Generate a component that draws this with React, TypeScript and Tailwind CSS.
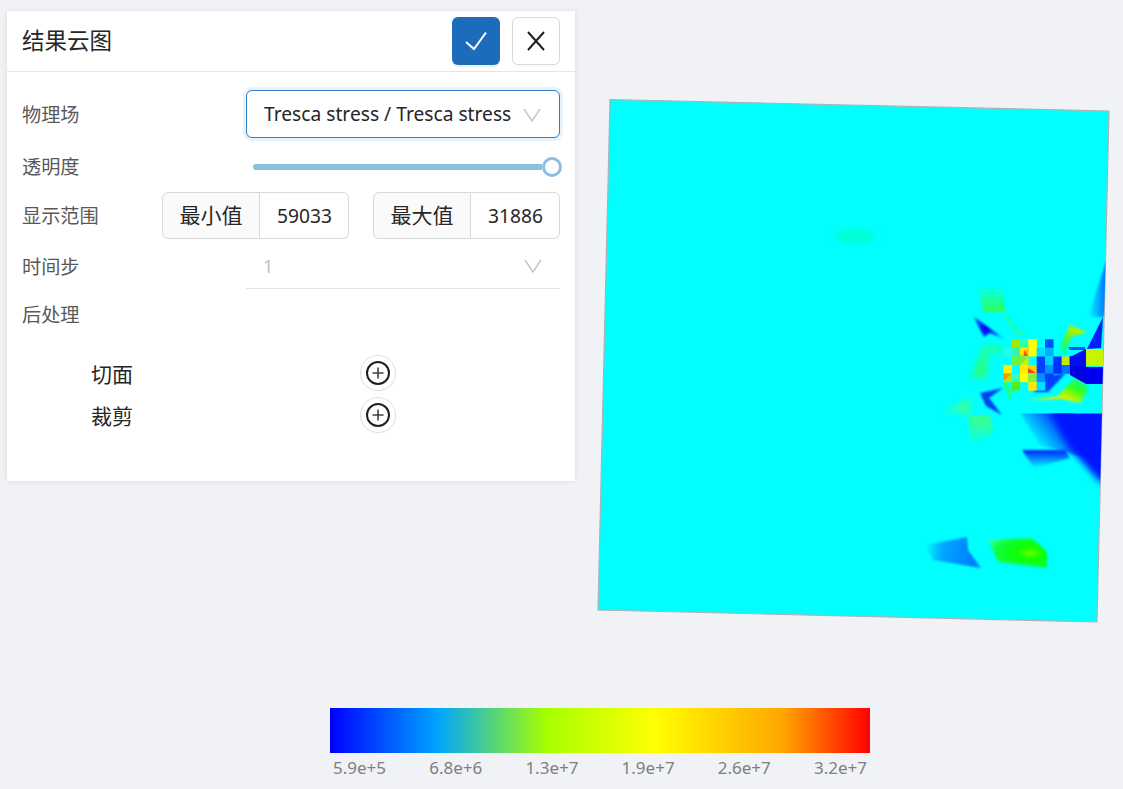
const squares: [number, number, string][] = [
  // col, row, colour
  [1, 0, "#a5e800"], [2, 0, "#30ffb0"], [3, 0, "#ffff00"], [5, 0, "#0050ff"],
  [0, 1, "#20ffe8"], [1, 1, "#30f5b0"], [2, 1, "#ffe800"], [3, 1, "#ffff00"], [4, 1, "#00ddff"], [5, 1, "#00b0ff"],
  [1, 2, "#70f040"], [2, 2, "#d0f000"], [4, 2, "#0040ff"], [5, 2, "#00d0ff"], [6, 2, "#0030ff"], [7, 2, "#c8e800"],
  [0, 3, "#fff000"], [2, 3, "#ffee00"], [3, 3, "#ffd000"], [4, 3, "#0040ff"], [5, 3, "#0090ff"], [6, 3, "#0030ff"], [7, 3, "#0070ff"],
  [0, 4, "#b0e800"], [1, 4, "#30ffc0"], [2, 4, "#ffff00"], [3, 4, "#80f040"], [4, 4, "#0090ff"], [5, 4, "#0040ff"],
  [1, 5, "#50f020"], [3, 5, "#ffe800"], [4, 5, "#00e0ff"],
];

const colX = [1003.3, 1011.6, 1020, 1028.3, 1036.7, 1045, 1053.3, 1061.7];
const rowY = [339.3, 347.6, 356.5, 365, 373.4, 381.8];

function Field() {
  return (
    <svg className="absolute left-0 top-0" width="1123" height="789" viewBox="0 0 1123 789">
      <defs>
        <clipPath id="plate">
          <polygon points="610,99.5 1109,111 1097,622 598,610" />
        </clipPath>
        <clipPath id="belowLine">
          <rect x="1000" y="413.5" width="120" height="100" />
        </clipPath>
        <filter id="soft" x="-30%" y="-30%" width="160%" height="160%">
          <feGaussianBlur stdDeviation="3" />
        </filter>
        <filter id="softer" x="-30%" y="-30%" width="160%" height="160%">
          <feGaussianBlur stdDeviation="5" />
        </filter>
        <filter id="slight" x="-30%" y="-30%" width="160%" height="160%">
          <feGaussianBlur stdDeviation="0.8" />
        </filter>
        <linearGradient id="edgeBlue" x1="0" y1="0" x2="1" y2="0">
          <stop offset="0" stopColor="#00ffff" />
          <stop offset="1" stopColor="#0050ff" />
        </linearGradient>
        <linearGradient id="fadeDown" x1="0" y1="0" x2="0" y2="1">
          <stop offset="0" stopColor="#0020ff" />
          <stop offset="1" stopColor="#00ffff" />
        </linearGradient>
        <linearGradient id="topFade" gradientUnits="userSpaceOnUse" x1="1064" y1="420" x2="1034" y2="444">
          <stop offset="0" stopColor="#0020ff" />
          <stop offset="0.55" stopColor="#00a0ff" />
          <stop offset="1" stopColor="#00ffff" />
        </linearGradient>
        <linearGradient id="greenUp" x1="0" y1="0" x2="0" y2="1">
          <stop offset="0" stopColor="#00ffff" />
          <stop offset="1" stopColor="#30ff50" />
        </linearGradient>
        <linearGradient id="greenLeft" x1="1" y1="0" x2="0" y2="0">
          <stop offset="0" stopColor="#40ff90" />
          <stop offset="1" stopColor="#00ffff" />
        </linearGradient>
        <linearGradient id="greenFade" x1="0" y1="0" x2="0" y2="1">
          <stop offset="0" stopColor="#40ff80" />
          <stop offset="1" stopColor="#00ffff" />
        </linearGradient>
        <linearGradient id="lobe" gradientUnits="userSpaceOnUse" x1="1070" y1="400" x2="1082" y2="376">
          <stop offset="0" stopColor="#d8f000" />
          <stop offset="0.45" stopColor="#30ff20" />
          <stop offset="1" stopColor="#00ffc0" />
        </linearGradient>
        <linearGradient id="spike" gradientUnits="userSpaceOnUse" x1="1072" y1="330" x2="1062" y2="355">
          <stop offset="0" stopColor="#b0f000" />
          <stop offset="0.5" stopColor="#30ff40" />
          <stop offset="1" stopColor="#00ffc0" />
        </linearGradient>
        <linearGradient id="skyBlob" gradientUnits="userSpaceOnUse" x1="972" y1="545" x2="925" y2="540">
          <stop offset="0" stopColor="#0080ff" />
          <stop offset="0.6" stopColor="#00a8ff" />
          <stop offset="1" stopColor="#00ffff" />
        </linearGradient>
        <radialGradient id="greenBlob" gradientUnits="userSpaceOnUse" cx="1030" cy="553" r="50" gradientTransform="translate(0 304) scale(1 0.45)">
          <stop offset="0" stopColor="#70ff00" />
          <stop offset="0.25" stopColor="#10ff00" />
          <stop offset="0.7" stopColor="#10ff40" />
          <stop offset="1" stopColor="#40ffb0" />
        </radialGradient>
        <radialGradient id="arrowA" gradientUnits="userSpaceOnUse" cx="986" cy="328" r="18">
          <stop offset="0" stopColor="#0000e8" />
          <stop offset="0.6" stopColor="#0050ff" />
          <stop offset="1" stopColor="#00c0ff" />
        </radialGradient>
      </defs>
      <polygon points="610,99.5 1109,111 1097,622 598,610" fill="#00ffff" stroke="#adb3b5" strokeWidth="1.2" />
      <g clipPath="url(#plate)">
        <ellipse cx="855" cy="236" rx="21" ry="6" fill="#00ffc4" filter="url(#softer)" />

        {/* right edge, top */}
        <polygon points="1088,317 1106,262 1110,262 1104,317" fill="url(#edgeBlue)" filter="url(#slight)" />
        <polygon points="1103,317 1101,348 1087,349" fill="#0020ff" />
        <polygon points="1068,347 1085,347 1085,350 1070,350" fill="#0050ff" />

        {/* faint green patches */}
        <polygon points="977,285 1003,285 1005,312 984,312" fill="url(#greenUp)" filter="url(#slight)" />
        <polygon points="936,413 970,398 970,414" fill="url(#greenLeft)" filter="url(#soft)" />
        <polygon points="969,416 990,416 994,433 970,447" fill="url(#greenFade)" filter="url(#slight)" />
        <polygon points="984,346 1003,347 1003,352 988,352 987,378 971,378" fill="#30ff60" opacity="0.75" filter="url(#soft)" />

        {/* arrow marks */}
        <polygon points="973,316 1006,340 990,333 984,337" fill="url(#arrowA)" filter="url(#slight)" />
        <polygon points="980,393 1003,388 989,398 1002,415 986,406" fill="#0040f0" filter="url(#slight)" />
        <polyline points="1005,314 1016,332 1025,333" fill="none" stroke="#30ff70" strokeWidth="2" filter="url(#slight)" />
        <polyline points="1004,383 1010,392 1010,398" fill="none" stroke="#30ff40" strokeWidth="3" filter="url(#slight)" />

        {/* green spike and lower lobe */}
        <polygon points="1060,347 1070,325 1087,332 1071,337 1064,357" fill="url(#spike)" filter="url(#slight)" />
        <polygon points="1058,396 1077,375 1089,388 1080,403 1062,399 1028,400" fill="url(#lobe)" filter="url(#slight)" />
        <polygon points="1033,392 1048,392 1066,373 1053,375" fill="#0040ff" filter="url(#slight)" />

        {squares.map(([c, r, fill]) => (
          <rect key={`${c}-${r}`} x={colX[c]} y={rowY[r]} width="8.6" height="8.8" fill={fill} />
        ))}
        <polygon points="1020,356 1028.5,348 1028.5,356" fill="#ffc000" />
        <polygon points="1024,350 1028,356 1024,356" fill="#ff5000" />
        <polygon points="1028.3,368 1036,373 1028,373" fill="#ff4000" />
        <polygon points="1020,365 1028.5,356.5 1020,356.5" fill="#70f040" />
        <polygon points="1003.3,381 1011.8,373.4 1003.3,373.4" fill="#ff9000" />
        <rect x="1069.5" y="356" width="17" height="9" fill="#0030ff" />

        {/* blue wedge at the edge */}
        <polygon points="1070,357 1086,349 1086,366 1070,366" fill="#0010f0" />
        <polygon points="1070,366 1086,366 1086,384 1070,375" fill="#0000e0" />
        <rect x="1086" y="349" width="17" height="17" fill="#c8f400" />
        <rect x="1086" y="367" width="17" height="17" fill="#0000ee" />

        {/* lower right blue */}
        <g clipPath="url(#belowLine)">
          <polygon points="1015,405 1072,405 1086,458 1040,445" fill="url(#topFade)" filter="url(#slight)" />
          <polygon points="1048,405 1110,405 1110,482 1100,482 1068,446" fill="#0018ff" filter="url(#soft)" />
        </g>
        <polygon points="1022,450 1065,450 1070,458 1034,468" fill="url(#fadeDown)" filter="url(#slight)" />

        {/* bottom blobs */}
        <polygon points="925,545 967,537 968,550 981,568 933,560" fill="url(#skyBlob)" filter="url(#slight)" />
        <polygon points="988,540 1032,538 1047,552 1047,568 998,562" fill="url(#greenBlob)" filter="url(#slight)" />
      </g>
    </svg>
  );
}

function Chevron({ className }: { className: string }) {
  return (
    <svg className={className} width="18" height="14" viewBox="0 0 18 14" fill="none" stroke="#c4c4c4" strokeWidth="1.4">
      <polyline points="1,1 9,13 17,1" />
    </svg>
  );
}

function PlusButton() {
  return (
    <button className="flex h-[36px] w-[36px] items-center justify-center rounded-full border border-[#e0e0e0] bg-white shadow-[0_2px_0_rgba(0,0,0,0.015)]">
      <svg width="26" height="26" viewBox="0 0 26 26" fill="none">
        <circle cx="13" cy="13" r="11" stroke="#1f1f1f" strokeWidth="2" />
        <path d="M13 7.5v11M7.5 13h11" stroke="#404040" strokeWidth="1.6" />
      </svg>
    </button>
  );
}

function RangeInput({ label, value }: { label: string; value: string }) {
  return (
    <div className="flex h-[47px] w-[187px] text-[#262626]">
      <div className="flex w-[98px] items-center justify-center rounded-l-[6px] border border-[#d9d9d9] bg-[#fafafa] pt-[1px] text-[21px]">
        {label}
      </div>
      <div className="flex flex-1 items-center overflow-hidden rounded-r-[6px] border border-l-0 border-[#d9d9d9] bg-white pl-[17px] pt-[1px] text-[19.2px]">
        {value}
      </div>
    </div>
  );
}

export default function App() {
  return (
    <div className="relative h-[789px] w-[1123px] overflow-hidden bg-[#f0f2f6] font-['Noto_Sans','Noto_Sans_CJK_SC',sans-serif]">
      <Field />

      {/* settings panel */}
      <div className="absolute left-[7px] top-[11px] h-[470px] w-[568px] bg-white shadow-[0_0_6px_rgba(0,0,0,0.09)]">
        <div className="flex h-[61px] items-center justify-between border-b border-[#e5e5e5] px-[15px]">
          <h1 className="text-[22.5px] text-[#262626]">结果云图</h1>
          <div className="flex gap-[12px]">
            <button className="flex h-[48px] w-[48px] items-center justify-center rounded-[6px] bg-[#1c6cbb] shadow-[0_2px_0_rgba(28,108,187,0.1)]">
              <svg width="24" height="20" viewBox="0 0 24 20" fill="none" stroke="white" strokeWidth="2">
                <polyline points="2,11 10,18 22,1.5" />
              </svg>
            </button>
            <button className="flex h-[48px] w-[48px] items-center justify-center rounded-[6px] border border-[#d9d9d9] bg-white shadow-[0_2px_0_rgba(0,0,0,0.02)]">
              <svg width="20" height="20" viewBox="0 0 20 20" fill="none" stroke="#1f1f1f" strokeWidth="2">
                <path d="M2 1l16 18M18 1L2 19" />
              </svg>
            </button>
          </div>
        </div>

        <div className="flex flex-col px-[15px] pt-[18px] text-[19.2px] text-[#595959]">
          <div className="flex h-[48px] items-center justify-between">
            <span className="pt-[2px]">物理场</span>
            <div className="flex h-[48px] w-[314px] items-center justify-between rounded-[6px] border border-[#2f80c8] bg-white pl-[17px] pr-[18px] pt-[1px] text-[#262626] shadow-[0_0_0_3px_#e8f2fb]">
              <span>Tresca stress / Tresca stress</span>
              <Chevron className="shrink-0" />
            </div>
          </div>

          <div className="mt-[8px] flex h-[40px] items-center justify-between">
            <span className="pt-[2px]">透明度</span>
            <div className="-mr-[2px] mt-[1px] flex w-[309px] items-center">
              <div className="h-[6px] flex-1 rounded-l-full bg-[#8bbfe0]" />
              <div className="h-[20px] w-[20px] rounded-full border-[3px] border-[#8bc0e2] bg-white" />
            </div>
          </div>

          <div className="mt-[6px] flex h-[47px] items-center">
            <span className="pt-[2px]">显示范围</span>
            <div className="ml-auto flex gap-[24px]">
              <RangeInput label="最小值" value="59033" />
              <RangeInput label="最大值" value="31886" />
            </div>
          </div>

          <div className="mt-[6px] flex h-[44px] items-center justify-between">
            <span className="pt-[1px]">时间步</span>
            <div className="flex h-[44px] w-[314px] items-center justify-between border-b border-[#e3e3e3] pl-[17px] pr-[18px] text-[18px] text-[#bfbfbf]">
              <span>1</span>
              <Chevron className="mb-[2px] shrink-0" />
            </div>
          </div>

          <div className="mt-[10px] flex h-[30px] items-center pt-[2px]">后处理</div>

          <div className="mt-[24px] flex h-[42px] items-center pl-[69px] text-[21px] text-[#262626]">
            <span className="w-[269px] pt-[2px]">切面</span>
            <div className="-mt-[3px]">
              <PlusButton />
            </div>
          </div>
          <div className="flex h-[42px] items-center pl-[69px] text-[21px] text-[#262626]">
            <span className="w-[269px] pt-[2px]">裁剪</span>
            <div className="-mt-[3px]">
              <PlusButton />
            </div>
          </div>
        </div>
      </div>

      {/* colour legend */}
      <div className="absolute left-[330px] top-[708px] w-[540px]">
        <div className="h-[45px] bg-[linear-gradient(to_right,#0000ff_0%,#00a5ff_20%,#a5ff00_40%,#ffff00_60%,#ffa500_84%,#ff0000_100%)]" />
        <div className="mt-[3px] flex justify-between px-[3px] text-[17px] leading-[24px] text-[#7f7f7f]">
          <span>5.9e+5</span>
          <span>6.8e+6</span>
          <span>1.3e+7</span>
          <span>1.9e+7</span>
          <span>2.6e+7</span>
          <span>3.2e+7</span>
        </div>
      </div>
    </div>
  );
}
